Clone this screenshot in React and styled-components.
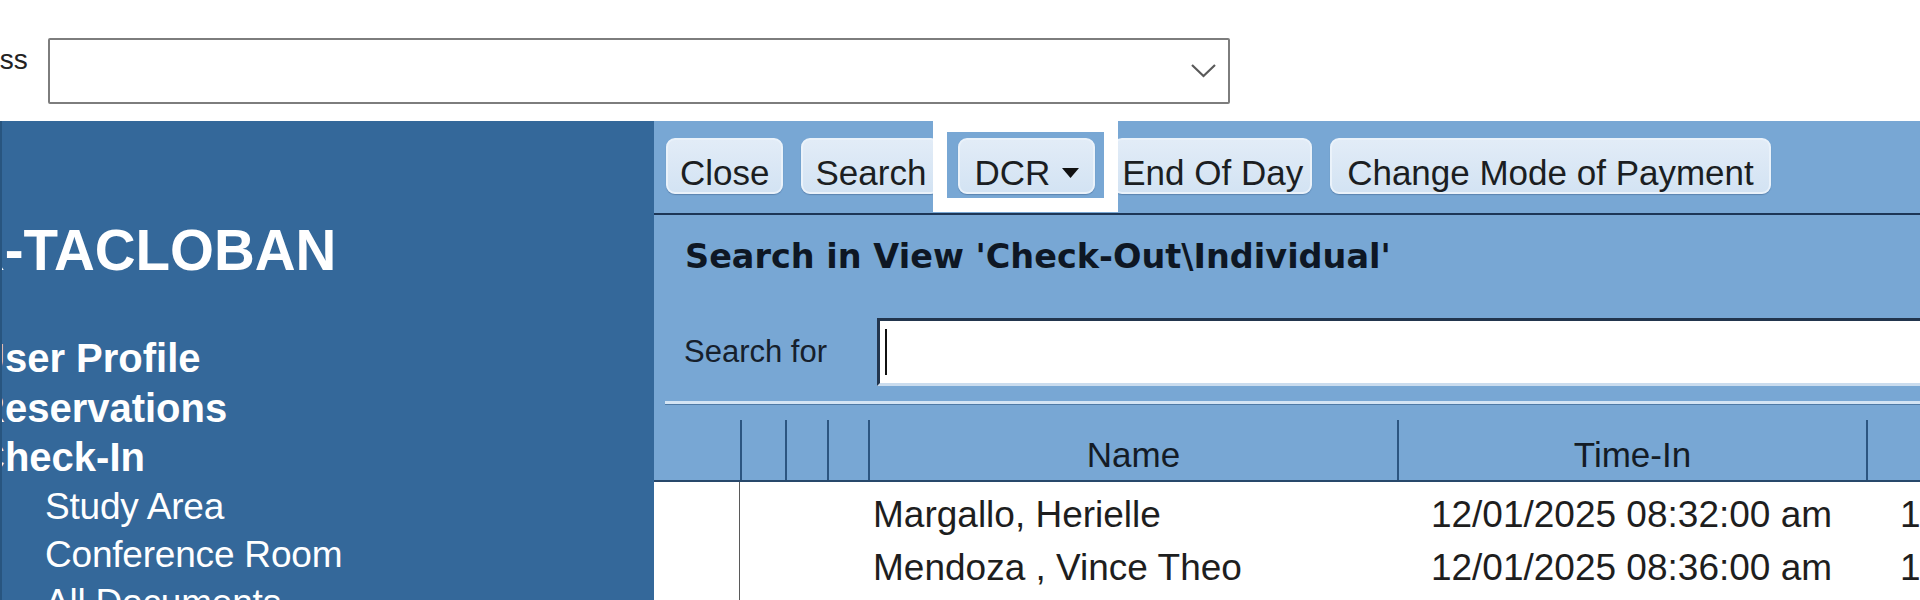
import React from 'react';
import styled, { createGlobalStyle } from 'styled-components';

const GlobalStyle = createGlobalStyle`
  html, body {
    margin: 0;
    padding: 0;
    background: #ffffff;
    overflow: hidden;
  }
  body {
    font-family: "Liberation Sans", Arial, sans-serif;
  }
`;

const Page = styled.div`
  width: 1920px;
  height: 600px;
  overflow: hidden;
  display: flex;
  flex-direction: column;
  background: #ffffff;
`;

const TopArea = styled.div`
  height: 121px;
  flex-shrink: 0;
  box-sizing: border-box;
  padding-top: 38px;
  display: flex;
  align-items: flex-start;
  overflow: hidden;
`;

const FieldLabel = styled.span`
  font-size: 28px;
  line-height: 28px;
  margin-top: 8px;
  margin-left: -75px;
  color: #222;
  white-space: nowrap;
`;

const Combo = styled.div`
  margin-left: 20px;
  width: 1182px;
  height: 66px;
  flex-shrink: 0;
  box-sizing: border-box;
  border: 2px solid #7d7d7d;
  border-radius: 2px;
  background: #fff;
  display: flex;
  align-items: center;
  justify-content: flex-end;
  padding-right: 12px;
`;

const Body = styled.div`
  flex: 1;
  display: flex;
  min-height: 0;
`;

const Sidebar = styled.nav`
  width: 654px;
  flex-shrink: 0;
  background: #34689a;
  overflow: hidden;
  color: #ffffff;
  border-left: 2px solid #28557f;
  box-sizing: border-box;
`;

const SiteTitle = styled.h1`
  margin: 98px 0 0 -38px;
  font-size: 56.5px;
  line-height: 64px;
  font-weight: 700;
  white-space: nowrap;
`;

const NavList = styled.ul`
  list-style: none;
  margin: 51px 0 0 -26px;
  padding: 0;
`;

const NavItem = styled.li`
  font-size: ${(p) => (p.$sub ? '37px' : '40px')};
  font-weight: ${(p) => (p.$sub ? 400 : 700)};
  line-height: ${(p) => (p.$sub ? '48px' : '49.5px')};
  padding-left: ${(p) => (p.$sub ? '69px' : '0')};
  letter-spacing: ${(p) => (p.$sub ? '-0.2px' : '0')};
  white-space: nowrap;
`;

const Workspace = styled.section`
  flex: 1;
  background: #78a7d4;
  display: flex;
  flex-direction: column;
  min-width: 0;
  overflow: hidden;
`;

const Toolbar = styled.div`
  position: relative;
  height: 94px;
  flex-shrink: 0;
  box-sizing: border-box;
  padding: 17px 0 0 12px;
  display: flex;
  align-items: flex-start;
  gap: 18px;
  border-bottom: 2px solid #1d3656;
`;

const ToolButton = styled.button`
  height: 56px;
  box-sizing: border-box;
  padding: 14px ${(p) => p.$pad || '12px'} 0;
  display: flex;
  align-items: center;
  gap: 12px;
  font-family: "Liberation Sans", Arial, sans-serif;
  font-size: 35px;
  color: #1b1e22;
  background: linear-gradient(#e2ecf7, #d3e3f3);
  border: 2px solid #eaf2fa;
  border-radius: 9px;
  box-shadow: 0 1px 1px rgba(40, 70, 110, 0.35);
  white-space: nowrap;
`;

const Highlight = styled.div`
  position: absolute;
  left: 279px;
  top: -3px;
  width: 185px;
  height: 94px;
  box-sizing: border-box;
  border: 14px solid #ffffff;
  pointer-events: none;
`;

const ViewTitle = styled.h2`
  margin: 0;
  height: 80px;
  flex-shrink: 0;
  line-height: 84px;
  padding-left: 31px;
  font-family: "DejaVu Sans", "Liberation Sans", sans-serif;
  font-size: 33.5px;
  font-weight: 700;
  color: #0e1724;
  white-space: nowrap;
`;

const SearchRow = styled.div`
  display: flex;
  align-items: center;
  flex-shrink: 0;
  padding: 23px 0 15px 30px;
`;

const SearchLabel = styled.label`
  width: 193px;
  flex-shrink: 0;
  font-size: 31px;
  color: #16202c;
`;

const SearchInput = styled.div`
  flex: 1;
  height: 68px;
  box-sizing: border-box;
  background: #ffffff;
  border-top: 3px solid #22354d;
  border-left: 3px solid #22354d;
  border-bottom: 3px solid #cadcee;
  display: flex;
  align-items: center;
  padding-left: 5px;
`;

const Caret = styled.span`
  width: 2px;
  height: 46px;
  background: #111;
`;

const GridTop = styled.div`
  margin-left: 11px;
  height: 3px;
  flex-shrink: 0;
  background: #d3e4f4;
  border-bottom: 1px solid #4e7aa6;
`;

const HeaderRow = styled.div`
  display: grid;
  grid-template-columns: 86px 45px 42px 41px 529px 469px 469px;
  height: 77px;
  flex-shrink: 0;
  box-sizing: border-box;
  border-bottom: 2px solid #28486b;
`;

const HeaderCell = styled.div`
  margin-top: 15px;
  border-left: ${(p) => (p.$first ? 'none' : '2px solid #2c5580')};
  display: flex;
  align-items: center;
  justify-content: center;
  padding-top: 9px;
  font-size: 35px;
  color: #141c26;
  white-space: nowrap;
`;

const GridBody = styled.div`
  flex: 1;
  background: #ffffff;
  display: flex;
`;

const RowHeaderColumn = styled.div`
  width: 86px;
  flex-shrink: 0;
  border-right: 1px solid #5a5a5a;
  box-sizing: border-box;
`;

const Rows = styled.div`
  padding-top: 6px;
`;

const DataRow = styled.div`
  display: grid;
  grid-template-columns: 45px 42px 41px 529px 469px 469px;
  height: 53px;
  align-items: center;
  font-size: 37px;
  color: #1e1e1e;
  white-space: nowrap;
`;

const DataCell = styled.div`
  padding-left: ${(p) => (p.$center ? '0' : '5px')};
  text-align: ${(p) => (p.$center ? 'center' : 'left')};
  overflow: hidden;
`;

const Chevron = () => (
  <svg width="25" height="14" viewBox="0 0 25 14">
    <polyline points="1,1 12.5,12 24,1" fill="none" stroke="#5a5a5a" strokeWidth="2.2" />
  </svg>
);

const DropArrow = () => (
  <svg width="17" height="10" viewBox="0 0 17 10">
    <polygon points="0,0 17,0 8.5,10" fill="#111" />
  </svg>
);

const visits = [
  { name: 'Margallo, Herielle', timeIn: '12/01/2025 08:32:00 am', timeOut: '12/01/2025 10:15:00 am' },
  { name: 'Mendoza , Vince Theo', timeIn: '12/01/2025 08:36:00 am', timeOut: '12/01/2025 10:20:00 am' },
];

export default function App() {
  return (
    <>
      <GlobalStyle />
      <Page>
        <TopArea>
          <FieldLabel>Address</FieldLabel>
          <Combo>
            <Chevron />
          </Combo>
        </TopArea>
        <Body>
          <Sidebar>
            <SiteTitle>R-TACLOBAN</SiteTitle>
            <NavList>
              <NavItem>User Profile</NavItem>
              <NavItem>Reservations</NavItem>
              <NavItem>Check-In</NavItem>
              <NavItem $sub>Study Area</NavItem>
              <NavItem $sub>Conference Room</NavItem>
              <NavItem $sub>All Documents</NavItem>
            </NavList>
          </Sidebar>
          <Workspace>
            <Toolbar>
              <ToolButton>Close</ToolButton>
              <ToolButton>Search</ToolButton>
              <ToolButton $pad="14px">
                DCR <DropArrow />
              </ToolButton>
              <ToolButton $pad="7px">End Of Day</ToolButton>
              <ToolButton $pad="15px">Change Mode of Payment</ToolButton>
              <Highlight />
            </Toolbar>
            <ViewTitle>Search in View 'Check-Out\Individual'</ViewTitle>
            <SearchRow>
              <SearchLabel>Search for</SearchLabel>
              <SearchInput>
                <Caret />
              </SearchInput>
            </SearchRow>
            <GridTop />
            <HeaderRow>
              <HeaderCell $first />
              <HeaderCell />
              <HeaderCell />
              <HeaderCell />
              <HeaderCell>Name</HeaderCell>
              <HeaderCell>Time-In</HeaderCell>
              <HeaderCell>Time-Out</HeaderCell>
            </HeaderRow>
            <GridBody>
              <RowHeaderColumn />
              <Rows>
                {visits.map((v) => (
                  <DataRow key={v.name}>
                    <DataCell />
                    <DataCell />
                    <DataCell />
                    <DataCell>{v.name}</DataCell>
                    <DataCell $center>{v.timeIn}</DataCell>
                    <DataCell $center>{v.timeOut}</DataCell>
                  </DataRow>
                ))}
              </Rows>
            </GridBody>
          </Workspace>
        </Body>
      </Page>
    </>
  );
}
